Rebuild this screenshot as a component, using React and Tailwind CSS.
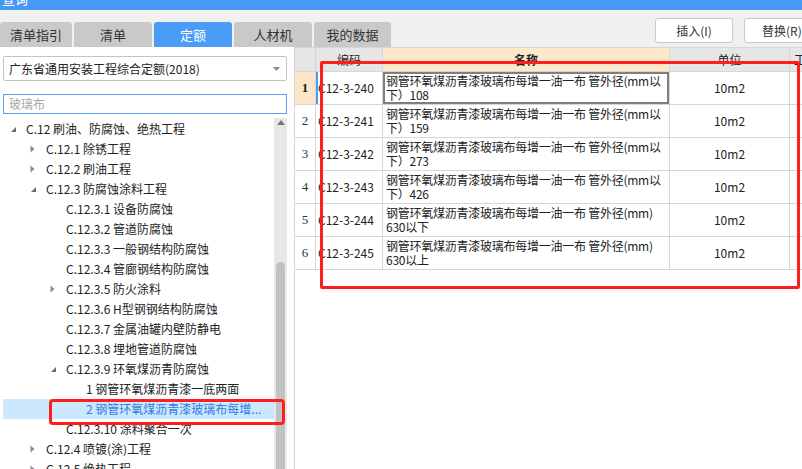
import React from 'react';

const tabs = [
  { label: '清单指引', w: 'w-[72px]' },
  { label: '清单', w: 'w-[78px]' },
  { label: '定额', w: 'w-[78px]', active: true },
  { label: '人材机', w: 'w-[78px]' },
  { label: '我的数据', w: 'w-[77px]' },
];

const indent = ['pl-[7px]', 'pl-[27px]', 'pl-[47px]', 'pl-[67px]'];

const tree = [
  { lv: 0, arrow: 'open', text: 'C.12 刷油、防腐蚀、绝热工程' },
  { lv: 1, arrow: 'closed', text: 'C.12.1 除锈工程' },
  { lv: 1, arrow: 'closed', text: 'C.12.2 刷油工程' },
  { lv: 1, arrow: 'open', text: 'C.12.3 防腐蚀涂料工程' },
  { lv: 2, text: 'C.12.3.1 设备防腐蚀' },
  { lv: 2, text: 'C.12.3.2 管道防腐蚀' },
  { lv: 2, text: 'C.12.3.3 一般钢结构防腐蚀' },
  { lv: 2, text: 'C.12.3.4 管廊钢结构防腐蚀' },
  { lv: 2, arrow: 'closed', text: 'C.12.3.5 防火涂料' },
  { lv: 2, text: 'C.12.3.6 H型钢钢结构防腐蚀' },
  { lv: 2, text: 'C.12.3.7 金属油罐内壁防静电' },
  { lv: 2, text: 'C.12.3.8 埋地管道防腐蚀' },
  { lv: 2, arrow: 'open', text: 'C.12.3.9 环氧煤沥青防腐蚀' },
  { lv: 3, text: '1 钢管环氧煤沥青漆一底两面' },
  { lv: 3, text: '2 钢管环氧煤沥青漆玻璃布每增...', selected: true },
  { lv: 2, text: 'C.12.3.10 涂料聚合一次' },
  { lv: 1, arrow: 'closed', text: 'C.12.4 喷镀(涂)工程' },
  { lv: 1, arrow: 'closed', text: 'C.12.5 绝热工程' },
];

const rows = [
  { n: 1, code: 'C12-3-240', l1: '钢管环氧煤沥青漆玻璃布每增一油一布 管外径(mm以', l2: '下）108' },
  { n: 2, code: 'C12-3-241', l1: '钢管环氧煤沥青漆玻璃布每增一油一布 管外径(mm以', l2: '下）159' },
  { n: 3, code: 'C12-3-242', l1: '钢管环氧煤沥青漆玻璃布每增一油一布 管外径(mm以', l2: '下）273' },
  { n: 4, code: 'C12-3-243', l1: '钢管环氧煤沥青漆玻璃布每增一油一布 管外径(mm以', l2: '下）426' },
  { n: 5, code: 'C12-3-244', l1: '钢管环氧煤沥青漆玻璃布每增一油一布 管外径(mm)', l2: '630以下' },
  { n: 6, code: 'C12-3-245', l1: '钢管环氧煤沥青漆玻璃布每增一油一布 管外径(mm)', l2: '630以上' },
];

function Arrow({ type }) {
  if (type === 'open') {
    return (
      <svg width="7" height="7" viewBox="0 0 7 7">
        <path d="M6 1 L6 6 L1 6 Z" fill="#6b6b6b" />
      </svg>
    );
  }
  if (type === 'closed') {
    return (
      <svg width="5" height="8" viewBox="0 0 5 8">
        <path d="M0.5 0.5 L4.5 4 L0.5 7.5 Z" fill="#8a8a8a" />
      </svg>
    );
  }
  return null;
}

const cell = 'border-r border-b border-[#d6d6d6]';

export default function App() {
  return (
    <div className="relative w-[802px] h-[469px] overflow-hidden bg-white text-[#222] font-['Noto_Sans_CJK_SC','Microsoft_YaHei',sans-serif]">
      {/* title bar */}
      <div className="h-[10px] bg-[#4898f6] overflow-hidden">
        <div className="-mt-[9px] pl-[2px] text-[13px] leading-[16px] text-white">查询</div>
      </div>

      {/* tabs + buttons strip */}
      <div className="h-[37px] bg-[#f0f0f0] flex">
        <div className="flex gap-[2px] items-end">
          {tabs.map(t => (
            <div
              key={t.label}
              className={`${t.w} h-[25px] rounded-t-[3px] flex items-center justify-center text-[13px] ${t.active ? 'bg-[#4a9cf7] text-white' : 'bg-[#c9c9c9] text-[#333]'}`}
            >
              {t.label}
            </div>
          ))}
        </div>
        <div className="flex-1 flex gap-[11px] justify-end pt-[8px] -mr-[10px]">
          <button className="w-[78px] h-[25px] bg-white border border-[#c9c9c9] rounded-[3px] text-[12px] text-[#333]">插入(I)</button>
          <button className="w-[68px] h-[25px] bg-white border border-[#c9c9c9] rounded-[3px] text-[12px] text-[#333] text-left pl-[17px]">替换(R)</button>
        </div>
      </div>

      <div className="flex h-[422px]">
        {/* left panel */}
        <div className="w-[295px] border-r border-[#d4d4d4] flex flex-col shrink-0">
          <div className="pl-[3px] pr-[7px] pt-[9px]">
            <div className="h-[25px] border border-[#c4c4c4] rounded-[2px] flex items-center justify-between pl-[5px] pr-[6px] text-[12px]">
              <span>广东省通用安装工程综合定额(2018)</span>
              <svg width="7" height="4" viewBox="0 0 7 4"><path d="M0 0 L7 0 L3.5 4 Z" fill="#888" /></svg>
            </div>
            <div className="mt-[13px] h-[20px] border border-[#5aa2f2] flex items-center pl-[5px] text-[12px] text-[#a8a8a8]">
              玻璃布
            </div>
          </div>
          <div className="flex mt-[4px] flex-1 min-h-0">
            <div className="w-[274px] pl-[3px] pt-[1px]">
              {tree.map(item => (
                <div
                  key={item.text}
                  className={`h-[20px] flex items-center whitespace-nowrap text-[12px] ${indent[item.lv]} ${item.selected ? 'bg-[#cce8ff] text-[#2f7de1]' : ''}`}
                >
                  <span className="w-[16px] flex items-center justify-start"><Arrow type={item.arrow} /></span>
                  <span>{item.text}</span>
                </div>
              ))}
            </div>
            <div className="w-[13px] bg-[#e8e8e8] flex flex-col items-center">
              <svg className="mt-[2px]" width="8" height="5" viewBox="0 0 8 5"><path d="M0 5 L4 0 L8 5 Z" fill="#777" /></svg>
              <div className="mt-[137px] w-[9px] flex-1 bg-[#c1c1c1] rounded-t-full" />
            </div>
          </div>
        </div>

        {/* table */}
        <div className="flex-1 min-w-0 overflow-hidden">
          <div className="grid grid-cols-[21px_67px_287px_120px_40px] border-t border-[#d6d6d6] text-[12px]">
            <div className={`${cell} h-[24px] bg-[#e6e6e6]`} />
            <div className={`${cell} h-[24px] bg-[#e6e6e6] flex items-center justify-center`}>编码</div>
            <div className={`${cell} h-[24px] bg-[#fde9c9] flex items-center justify-center font-bold`}>名称</div>
            <div className={`${cell} h-[24px] bg-[#e6e6e6] flex items-center justify-center`}>单位</div>
            <div className={`${cell} h-[24px] bg-[#e6e6e6] flex items-center pl-[4px] whitespace-nowrap overflow-hidden`}>工程量</div>
            {rows.map(r => (
              <React.Fragment key={r.n}>
                <div className={`${cell} h-[33px] flex items-center justify-center font-['Liberation_Serif',serif] text-[13px] ${r.n === 1 ? 'bg-[#fde6c6] font-bold' : 'text-[#333]'}`}>{r.n}</div>
                <div className={`${cell} h-[33px] flex items-center pl-[2px] ${r.n === 1 ? 'shadow-[inset_2px_0_0_#4a9cf7]' : ''}`}>{r.code}</div>
                <div className={`${cell} h-[33px] pl-[3px] pt-[2px] leading-[14px] tracking-[-0.25px] whitespace-nowrap overflow-hidden ${r.n === 1 ? 'shadow-[inset_0_0_0_2px_#7f7f7f]' : ''}`}>
                  <div>{r.l1}</div>
                  <div>{r.l2}</div>
                </div>
                <div className={`${cell} h-[33px] flex items-center justify-center`}>10m2</div>
                <div className={`${cell} h-[33px]`} />
              </React.Fragment>
            ))}
          </div>
        </div>
      </div>

      {/* red highlight boxes */}
      <div className="absolute left-[320px] top-[61px] w-[480px] h-[228px] border-[3px] border-[#ff1e1e] rounded-[2px]" />
      <div className="absolute left-[49px] top-[399px] w-[236px] h-[26px] border-[3px] border-[#ff1e1e] rounded-[4px]" />
    </div>
  );
}
